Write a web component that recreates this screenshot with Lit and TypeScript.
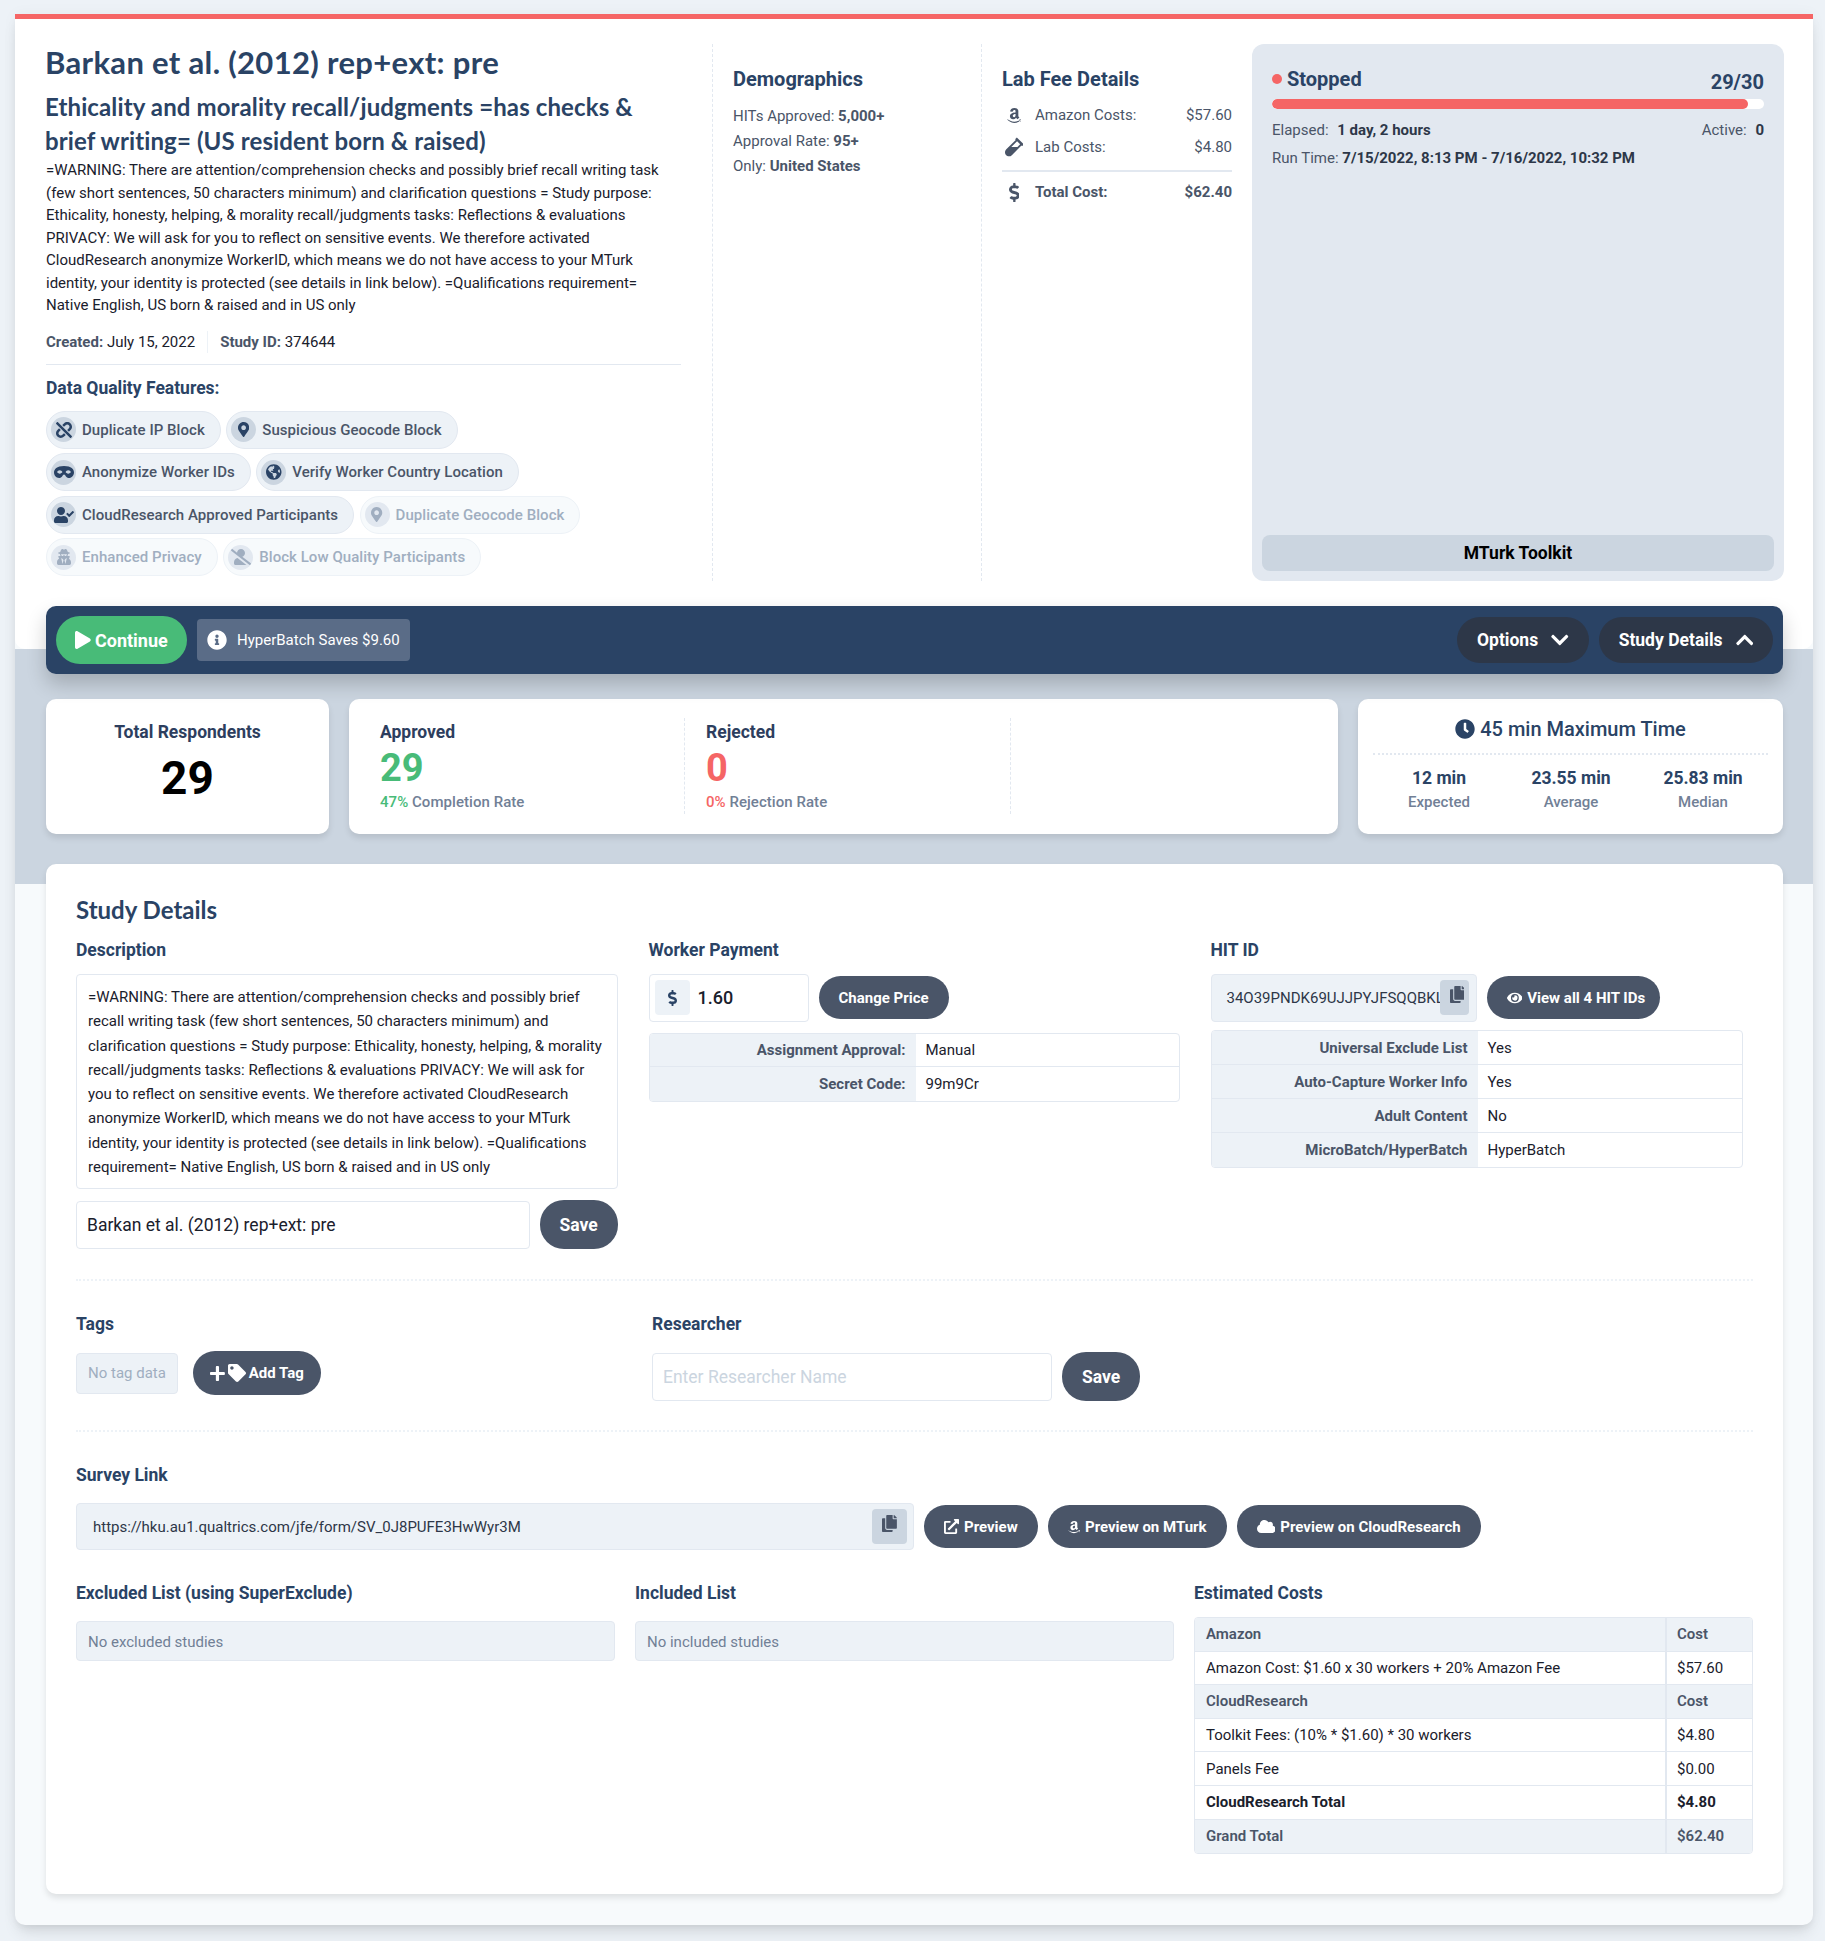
import { LitElement, css, html, svg } from 'lit';
import { customElement } from 'lit/decorators.js';

const ICONS: Record<string, [string, string]> = {
  play: ['0 0 448 512', 'M424.4 214.7L72.4 6.6C43.8-10.3 0 6.1 0 47.9V464c0 37.5 40.7 60.1 72.4 41.3l352-208c31.4-18.5 31.5-64.1 0-82.6z'],
  info: ['0 0 512 512', 'M256 8C119.043 8 8 119.083 8 256c0 136.997 111.043 248 248 248s248-111.003 248-248C504 119.083 392.957 8 256 8zm0 110c23.196 0 42 18.804 42 42s-18.804 42-42 42-42-18.804-42-42 18.804-42 42-42zm56 254c0 6.627-5.373 12-12 12h-88c-6.627 0-12-5.373-12-12v-24c0-6.627 5.373-12 12-12h12v-64h-12c-6.627 0-12-5.373-12-12v-24c0-6.627 5.373-12 12-12h64c6.627 0 12 5.373 12 12v100h12c6.627 0 12 5.373 12 12v24z'],
  marker: ['0 0 384 512', 'M172.268 501.67C26.97 291.031 0 268.413 0 192 0 85.961 85.961 0 192 0s192 85.961 192 192c0 76.413-26.97 99.031-172.268 309.67-9.535 13.774-29.93 13.773-39.464 0zM192 272c44.183 0 80-35.817 80-80s-35.817-80-80-80-80 35.817-80 80 35.817 80 80 80z'],
  clock: ['0 0 512 512', 'M256,8C119,8,8,119,8,256S119,504,256,504,504,393,504,256,393,8,256,8Zm92.49,313h0l-20,25a16,16,0,0,1-22.49,2.5h0l-67-49.72a40,40,0,0,1-15-31.23V112a16,16,0,0,1,16-16h32a16,16,0,0,1,16,16V256l58,42.5A16,16,0,0,1,348.49,321Z'],
  dollar: ['0 0 288 512', 'M209.2 233.4l-108-31.6C88.7 198.2 80 186.5 80 173.5c0-16.3 13.2-29.5 29.5-29.5h66.3c12.2 0 24.2 3.7 34.2 10.5 6.1 4.1 14.3 3.1 19.5-2l34.8-34c7.1-6.9 6.1-18.4-1.8-24.5C238 74.8 207.4 64.1 176 64V16c0-8.8-7.2-16-16-16h-32c-8.8 0-16 7.2-16 16v48h-2.5C45.8 64-5.4 118.7.5 183.6c4.2 46.1 39.4 83.6 83.8 96.6l102.5 30c12.5 3.7 21.2 15.3 21.2 28.3 0 16.3-13.2 29.5-29.5 29.5h-66.3C100 368 88 364.3 78 357.5c-6.1-4.1-14.3-3.1-19.5 2l-34.8 34c-7.1 6.9-6.1 18.4 1.8 24.5 24.5 19.2 55.1 29.9 86.5 30v48c0 8.8 7.2 16 16 16h32c8.8 0 16-7.2 16-16v-48.2c46.6-.9 90.3-28.6 105.7-72.7 21.5-61.6-14.6-124.8-72.5-141.7z'],
  down: ['0 0 448 512', 'M207.029 381.476L12.686 187.132c-9.373-9.373-9.373-24.569 0-33.941l22.667-22.667c9.357-9.357 24.522-9.375 33.901-.04L224 284.505l154.745-154.021c9.379-9.335 24.544-9.317 33.901.04l22.667 22.667c9.373 9.373 9.373 24.569 0 33.941L240.971 381.476c-9.373 9.372-24.569 9.372-33.942 0z'],
  up: ['0 0 448 512', 'M240.971 130.524l194.343 194.343c9.373 9.373 9.373 24.569 0 33.941l-22.667 22.667c-9.357 9.357-24.522 9.375-33.901.04L224 227.495 69.255 381.516c-9.379 9.335-24.544 9.317-33.901-.04l-22.667-22.667c-9.373-9.373-9.373-24.569 0-33.941L207.03 130.525c9.372-9.373 24.568-9.373 33.941-.001z'],
  eye: ['0 0 576 512', 'M572.52 241.4C518.29 135.59 410.93 64 288 64S57.68 135.64 3.48 241.41a32.35 32.35 0 0 0 0 29.19C57.71 376.41 165.07 448 288 448s230.32-71.64 284.52-177.41a32.35 32.35 0 0 0 0-29.19zM288 400a144 144 0 1 1 144-144 143.93 143.93 0 0 1-144 144zm0-240a95.31 95.31 0 0 0-25.31 3.79 47.85 47.85 0 0 1-66.9 66.9A95.78 95.78 0 1 0 288 160z'],
  plus: ['0 0 448 512', 'M416 208H272V64c0-17.67-14.33-32-32-32h-32c-17.67 0-32 14.33-32 32v144H32c-17.67 0-32 14.33-32 32v32c0 17.67 14.33 32 32 32h144v144c0 17.67 14.33 32 32 32h32c17.67 0 32-14.33 32-32V304h144c17.67 0 32-14.33 32-32v-32c0-17.67-14.33-32-32-32z'],
  tag: ['0 0 512 512', 'M0 252.118V48C0 21.49 21.49 0 48 0h204.118a48 48 0 0 1 33.941 14.059l211.882 211.882c18.745 18.745 18.745 49.137 0 67.882L293.823 497.941c-18.745 18.745-49.137 18.745-67.882 0L14.059 286.059A48 48 0 0 1 0 252.118zM112 64c-26.51 0-48 21.49-48 48s21.49 48 48 48 48-21.49 48-48-21.49-48-48-48z'],
  cloud: ['0 0 640 512', 'M537.6 226.6c4.1-10.7 6.4-22.4 6.4-34.6 0-53-43-96-96-96-19.7 0-38.1 6-53.3 16.2C367 64.2 315.3 32 256 32c-88.4 0-160 71.6-160 160 0 2.7.1 5.4.2 8.1C40.2 219.8 0 273.2 0 336c0 79.5 64.5 144 144 144h368c70.7 0 128-57.3 128-128 0-61.9-44-113.6-102.4-125.4z'],
  copy: ['0 0 448 512', 'M320 448v40c0 13.255-10.745 24-24 24H24c-13.255 0-24-10.745-24-24V120c0-13.255 10.745-24 24-24h72v296c0 30.879 25.121 56 56 56h168zm0-344V0H152c-13.255 0-24 10.745-24 24v368c0 13.255 10.745 24 24 24h272c13.255 0 24-10.745 24-24V128H344c-13.2 0-24-10.8-24-24zm120.971-31.029L375.029 7.029A24 24 0 0 0 358.059 0H352v96h96v-6.059a24 24 0 0 0-7.029-16.97z'],
  external: ['0 0 512 512', 'M432,320H400a16,16,0,0,0-16,16V448H64V128H208a16,16,0,0,0,16-16V80a16,16,0,0,0-16-16H48A48,48,0,0,0,0,112V464a48,48,0,0,0,48,48H400a48,48,0,0,0,48-48V336A16,16,0,0,0,432,320ZM488,0h-128c-21.37,0-32.05,25.91-17,41l35.73,35.73L135,320.37a24,24,0,0,0,0,34L157.67,377a24,24,0,0,0,34,0L435.28,133.32,471,169c15,15,41,4.5,41-17V24A24,24,0,0,0,488,0Z'],
  mask: ['0 0 640 512', 'M320.67 64c-442.6 0-357.57 384-158.46 384 39.9 0 77.47-20.69 101.42-55.86l25.73-37.79c15.66-22.99 46.97-22.99 62.63 0l25.73 37.79C401.66 427.31 439.23 448 479.13 448c189.86 0 290.63-384-158.46-384zM184 308.36c-41.06 0-67.76-25.66-80.08-41.05-5.23-6.53-5.23-16.09 0-22.63 12.32-15.4 39.01-41.05 80.08-41.05s67.76 25.66 80.08 41.05c5.23 6.53 5.23 16.09 0 22.63-12.32 15.39-39.02 41.05-80.08 41.05zm272 0c-41.06 0-67.76-25.66-80.08-41.05-5.23-6.53-5.23-16.09 0-22.63 12.32-15.4 39.01-41.05 80.08-41.05s67.76 25.66 80.08 41.05c5.23 6.53 5.23 16.09 0 22.63-12.32 15.39-39.02 41.05-80.08 41.05z'],
  userCheck: ['0 0 640 512', 'M224 256c70.7 0 128-57.3 128-128S294.7 0 224 0 96 57.3 96 128s57.3 128 128 128zm89.6 32h-16.7c-22.2 10.2-46.9 16-72.9 16s-50.6-5.8-72.9-16h-16.7C60.2 288 0 348.2 0 422.4V464c0 26.5 21.5 48 48 48h352c26.5 0 48-21.5 48-48v-41.6c0-74.2-60.2-134.4-134.4-134.4zm323-128.4l-27.8-28.1c-4.6-4.7-12.1-4.7-16.8-.1l-104.8 104-45.5-45.8c-4.6-4.7-12.1-4.7-16.8-.1l-28.1 27.9c-4.7 4.6-4.7 12.1-.1 16.8l81.7 82.3c4.6 4.7 12.1 4.7 16.8.1l141.3-140.2c4.6-4.7 4.7-12.2.1-16.8z'],
  userSlash: ['0 0 640 512', 'M633.8 458.1L362.3 248.3C412.1 230.7 448 183.8 448 128 448 57.3 390.7 0 320 0c-67.1 0-121.5 51.8-126.9 117.4L45.5 3.4C38.5-2 28.5-.8 23 6.2L3.4 31.4c-5.4 7-4.2 17 2.8 22.4l588.4 454.7c7 5.4 17 4.2 22.5-2.8l19.6-25.3c5.4-6.8 4.1-16.9-2.9-22.3zM96 422.4V464c0 26.5 21.5 48 48 48h350.2L207.4 290.3C144.2 301.3 96 356 96 422.4z'],
  unlink: ['0 0 512 512', 'M304.083 405.907c4.686 4.686 4.686 12.284 0 16.971l-44.674 44.674c-59.263 59.262-155.693 59.266-214.961 0-59.264-59.265-59.264-155.696 0-214.96l44.675-44.675c4.686-4.686 12.284-4.686 16.971 0l39.598 39.598c4.686 4.686 4.686 12.284 0 16.971l-44.675 44.674c-28.072 28.073-28.072 73.75 0 101.823 28.072 28.072 73.75 28.073 101.824 0l44.674-44.674c4.686-4.686 12.284-4.686 16.971 0l39.597 39.598zm-56.568-260.216c4.686 4.686 12.284 4.686 16.971 0l44.674-44.674c28.072-28.075 73.75-28.073 101.824 0 28.072 28.073 28.072 73.75 0 101.823l-44.675 44.674c-4.686 4.686-4.686 12.284 0 16.971l39.598 39.598c4.686 4.686 12.284 4.686 16.971 0l44.675-44.675c59.265-59.265 59.265-155.695 0-214.96-59.266-59.264-155.695-59.264-214.961 0l-44.674 44.674c-4.686 4.686-4.686 12.284 0 16.971l39.597 39.598zm234.828 359.28l22.627-22.627c9.373-9.373 9.373-24.569 0-33.941L63.598 7.029c-9.373-9.373-24.569-9.373-33.941 0L7.029 29.657c-9.373 9.373-9.373 24.569 0 33.941l441.373 441.373c9.373 9.372 24.569 9.372 33.941 0z'],
  globe: ['0 0 496 512', 'M248 8C111.03 8 0 119.03 0 256s111.03 248 248 248 248-111.03 248-248S384.97 8 248 8zm82.29 357.6c-3.9 3.88-7.99 7.95-11.31 11.28-2.99 3-5.1 6.7-6.17 10.71-1.51 5.66-2.73 11.38-4.77 16.87l-17.39 46.85c-13.76 3-28 4.69-42.65 4.69v-27.38c1.69-12.62-7.64-36.26-22.63-51.25-6-6-9.37-14.14-9.37-22.63v-32.01c0-11.64-6.27-22.34-16.46-27.97-14.37-7.95-34.81-19.06-48.81-26.11-11.48-5.78-22.1-13.14-31.65-21.75l-.8-.72a114.792 114.792 0 0 1-18.06-20.74c-9.38-13.77-24.66-36.42-34.59-51.14 20.47-45.5 57.36-82.04 103.2-101.89l24.01 12.01C203.48 89.74 216 82.01 216 70.11v-11.3c7.99-1.29 16.12-2.11 24.39-2.42l28.3 28.3c6.25 6.25 6.25 16.38 0 22.63L264 112l-10.34 10.34c-3.12 3.12-3.12 8.19 0 11.31l4.69 4.69c3.12 3.12 3.12 8.19 0 11.31l-8 8a8.008 8.008 0 0 1-5.66 2.34h-8.99c-2.08 0-4.08.81-5.58 2.27l-9.92 9.65a8.008 8.008 0 0 0-1.58 9.31l15.59 31.19c2.66 5.32-1.21 11.58-7.15 11.58h-5.64c-1.93 0-3.79-.7-5.24-1.96l-9.28-8.06a16.017 16.017 0 0 0-15.55-3.1l-31.17 10.39a11.95 11.95 0 0 0-8.17 11.34c0 4.53 2.56 8.66 6.61 10.69l11.08 5.54c9.41 4.71 19.79 7.16 30.31 7.16s22.59 27.29 32 32h66.75c8.49 0 16.62 3.37 22.63 9.37l13.69 13.69a30.503 30.503 0 0 1 8.93 21.57 46.536 46.536 0 0 1-13.72 32.98zM417 274.25c-5.79-1.45-10.84-5-14.15-9.97l-17.98-26.97a23.97 23.97 0 0 1 0-26.62l19.59-29.38c2.32-3.47 5.5-6.29 9.24-8.15l12.98-6.49C440.2 193.59 448 223.87 448 256c0 8.67-.74 17.16-1.82 25.54L417 274.25z'],
  secret: ['0 0 448 512', 'M383.9 308.3l23.9-62.6c4-10.5-3.7-21.7-15-21.7h-58.5c11-18.9 17.8-40.6 17.8-64v-.3c39.2-7.8 64-19.1 64-31.7 0-13.3-27.3-25.1-70.1-33-9.2-32.8-27-65.8-40.6-82.8-9.5-11.9-25.9-15.6-39.5-8.8l-27.6 13.8c-9 4.5-19.6 4.5-28.6 0L182.1 3.4c-13.6-6.8-30-3.1-39.5 8.8-13.5 17-31.4 50-40.6 82.8-42.7 7.9-70 19.7-70 33 0 12.6 24.8 23.9 64 31.7v.3c0 23.4 6.8 45.1 17.8 64H56.3c-11.5 0-19.2 11.7-14.7 22.3l25.8 60.2C27.3 329.8 0 372.7 0 422.4v44.8C0 491.9 20.1 512 44.8 512h358.4c24.7 0 44.8-20.1 44.8-44.8v-44.8c0-48.4-25.8-90.4-64.1-114.1zM176 480l-41.6-192 49.6 32 24 40-32 120zm96 0l-32-120 24-40 49.6-32L272 480zm41.7-298.5c-3.9 11.9-7 24.6-16.5 33.4-10.1 9.3-48 22.4-64-25-2.8-8.4-15.4-8.4-18.3 0-17 50.2-56 32.4-64 25-9.5-8.8-12.7-21.5-16.5-33.4-.8-2.5-6.3-5.7-6.3-5.8v-10.8c28.3 3.6 61 5.8 96 5.8s67.7-2.1 96-5.8v10.8c-.1.1-5.6 3.2-6.4 5.8z'],
  vial: ['0 0 480 512', 'M477.7 186.1L309.5 18.3c-3.1-3.1-8.2-3.1-11.3 0l-34 33.9c-3.1 3.1-3.1 8.2 0 11.3l11.2 11.1L33 316.5c-38.8 38.7-45.1 102-9.4 143.5 20.6 24 49.5 36 78.4 35.9 26.4 0 52.8-10 72.9-30.1l246.3-245.7 11.2 11.1c3.1 3.1 8.2 3.1 11.3 0l34-33.9c3.1-3 3.1-8.1-.1-11.2zM318 256H161l148-147.7 78.5 78.3L318 256z'],
  amazon: ['0 0 448 512', 'M257.2 162.7c-48.7 1.8-169.5 15.5-169.5 117.5 0 109.5 138.3 114 183.5 43.2 6.5 10.2 35.4 37.5 45.3 46.8l56.8-56S341 288.9 341 261.4V114.3C341 89 316.5 32 228.7 32 140.7 32 94 87 94 136.3l73.5 6.8c16.3-49.5 54.2-49.5 54.2-49.5 40.7-.1 35.5 29.8 35.5 69.1zm0 86.8c0 80-84.2 68-84.2 17.2 0-47.2 50.5-56.7 84.2-57.8v40.6zm136 163.5c-7.7 10-70 67-174.5 67S34.2 408.5 9.7 379c-6.8-7.7 1-11.3 5.5-8.3C88.5 415.2 203 488.5 387.7 401c7.5-3.7 13.3 2 5.5 12zm39.8 2.2c-6.5 15.8-16 26.8-21.2 31-5.5 4.5-9.5 2.7-6.5-3.8s19.3-46.5 12.7-55c-6.5-8.3-37-4.3-48-3.2-10.8 1-13 2-14-.3-2.3-5.7 21.7-15.5 37.5-17.5 15.7-1.8 41-.8 46 5.7 3.7 5.1 0 27.1-6.5 43.1z'],
};

const icon = (name: string, h: number) => {
  const [vb, d] = ICONS[name];
  return html`<svg class="ic" viewBox=${vb} height=${h} fill="currentColor" aria-hidden="true">${svg`<path d=${d}></path>`}</svg>`;
};

const DESCRIPTION =
  '=WARNING: There are attention/comprehension checks and possibly brief recall writing task (few short sentences, 50 characters minimum) and clarification questions = Study purpose: Ethicality, honesty, helping, & morality recall/judgments tasks: Reflections & evaluations PRIVACY: We will ask for you to reflect on sensitive events. We therefore activated CloudResearch anonymize WorkerID, which means we do not have access to your MTurk identity, your identity is protected (see details in link below). =Qualifications requirement= Native English, US born & raised and in US only';

type Chip = { label: string; icon: string; size: number; off?: boolean };

const CHIP_ROWS: Chip[][] = [
  [
    { label: 'Duplicate IP Block', icon: 'unlink', size: 16 },
    { label: 'Suspicious Geocode Block', icon: 'marker', size: 15 },
  ],
  [
    { label: 'Anonymize Worker IDs', icon: 'mask', size: 16 },
    { label: 'Verify Worker Country Location', icon: 'globe', size: 16 },
  ],
  [
    { label: 'CloudResearch Approved Participants', icon: 'userCheck', size: 16 },
    { label: 'Duplicate Geocode Block', icon: 'marker', size: 15, off: true },
  ],
  [
    { label: 'Enhanced Privacy', icon: 'secret', size: 16, off: true },
    { label: 'Block Low Quality Participants', icon: 'userSlash', size: 16, off: true },
  ],
];

const PAY_ROWS = [
  ['Assignment Approval:', 'Manual'],
  ['Secret Code:', '99m9Cr'],
];

const HIT_ROWS = [
  ['Universal Exclude List', 'Yes'],
  ['Auto-Capture Worker Info', 'Yes'],
  ['Adult Content', 'No'],
  ['MicroBatch/HyperBatch', 'HyperBatch'],
];

const COST_ROWS: { a: string; b: string; kind: string }[] = [
  { a: 'Amazon', b: 'Cost', kind: 'head' },
  { a: 'Amazon Cost: $1.60 x 30 workers + 20% Amazon Fee', b: '$57.60', kind: '' },
  { a: 'CloudResearch', b: 'Cost', kind: 'head' },
  { a: 'Toolkit Fees: (10% * $1.60) * 30 workers', b: '$4.80', kind: '' },
  { a: 'Panels Fee', b: '$0.00', kind: '' },
  { a: 'CloudResearch Total', b: '$4.80', kind: 'total' },
  { a: 'Grand Total', b: '$62.40', kind: 'head' },
];

@customElement('app-root')
export class AppRoot extends LitElement {
  static styles = css`
    :host {
      display: block;
      background: #edf2f7;
      font-family: Roboto, 'Liberation Sans', sans-serif;
      font-size: 15px;
      color: #1a202c;
    }
    * { box-sizing: border-box; }
    .ic { display: block; flex: none; }

    .page { padding: 14px 12px 17px 15px; }
    .shell {
      background: #f7fafc;
      border-radius: 0 0 10px 10px;
      box-shadow: 0 10px 15px -3px rgba(0,0,0,.1), 0 4px 6px -2px rgba(0,0,0,.05), 0 0 15px rgba(0,0,0,.04);
    }

    .hero {
      position: relative;
      z-index: 1;
      background: #fff;
      border-top: 5px solid #f56565;
      border-radius: 0 0 10px 10px;
      padding: 25px 29px 68px 31px;
      display: grid;
      grid-template-columns: 667px 269px 270px 532px;
      height: 635px;
    }
    .left { padding-right: 31px; border-right: 1px dashed #e2e8f0; }
    .title {
      margin: 0 0 0 -1px;
      font: 700 31px/36px Lato, sans-serif;
      letter-spacing: .33px;
      color: #2a4365;
    }
    .subtitle {
      margin: 10px 0 0 -1px;
      font: 700 24px/34px Lato, sans-serif;
      letter-spacing: .12px;
      color: #2a4365;
    }
    .lead { margin: 1px 0 0; line-height: 22.5px; }
    .meta { margin-top: 14px; line-height: 22px; display: flex; }
    .meta b { color: #4a5568; font-weight: 700; }
    .meta .sep { margin: 0 12px; border-left: 1px solid #edf2f7; }
    .rule { height: 1px; background: #e2e8f0; margin-top: 11px; }
    .dq-title { margin: 11px 0; font-size: 17.5px; font-weight: 700; line-height: 24px; color: #2a4365; }
    .chips { display: flex; flex-direction: column; gap: 4.5px; }
    .chip-row { display: flex; gap: 5.5px; }
    .chip {
      height: 38px;
      display: flex;
      align-items: center;
      gap: 6px;
      padding: 0 15px 0 4px;
      border: 1px solid #e2e8f0;
      border-radius: 19px;
      background: #edf2f7;
      color: #4a5568;
      font-weight: 500;
      letter-spacing: .05px;
    }
    .chip .dot {
      width: 25px;
      height: 25px;
      border-radius: 50%;
      background: #cbd5e0;
      color: #2a4365;
      display: flex;
      align-items: center;
      justify-content: center;
    }
    .chip.off { background: #f7fafc; border-color: #edf2f7; color: #a0aec0; }
    .chip.off .dot { background: #e2e8f0; color: #a0aec0; }

    .col { padding: 21px 20px 0; border-right: 1px dashed #e2e8f0; }
    .col-title { margin: 0; font-size: 20px; line-height: 28px; font-weight: 700; color: #2a4365; }
    .demo { margin-top: 11px; color: #4a5568; line-height: 25px; }
    .fee-col { padding-right: 20px; border-right: 0; }
    .fee { display: flex; align-items: center; height: 32px; color: #4a5568; }
    .fee-icon { width: 33px; display: flex; justify-content: center; padding-right: 9px; }
    .fee-label { flex: 1; }
    .fee-first { margin-top: 6px; }
    .fee-rule { height: 2px; background: #e2e8f0; margin-top: 7px; }
    .fee.total { margin-top: 4px; font-weight: 700; }

    .status {
      display: flex;
      flex-direction: column;
      background: #e2e8f0;
      border-radius: 12px;
      padding: 19px 20px 10px;
    }
    .status-head { display: flex; justify-content: space-between; color: #2a4365; font-size: 20px; font-weight: 700; }
    .stopped { display: flex; align-items: center; gap: 5px; line-height: 30px; height: 30px; margin-top: 1px; }
    .stopped i { width: 10px; height: 10px; border-radius: 50%; background: #f56565; }
    .count { line-height: 30px; margin-top: 4px; }
    .bar { height: 10px; background: #fff; border-radius: 5px; margin-top: 2px; overflow: hidden; }
    .bar div { height: 100%; background: #f56565; border-radius: 5px; }
    .status-line { display: flex; justify-content: space-between; margin-top: 10px; line-height: 22px; color: #4a5568; }
    .status-line b { color: #2d3748; font-weight: 700; margin-left: 5px; }
    .run { margin-top: 6px; line-height: 22px; color: #4a5568; }
    .run b { color: #2d3748; font-weight: 700; }
    .toolkit {
      margin: auto -10px 0;
      height: 36px;
      border-radius: 8px;
      background: #cbd5e0;
      color: #000;
      font-size: 17.5px;
      font-weight: 700;
      display: flex;
      align-items: center;
      justify-content: center;
    }

    .band { display: flow-root; background: #cbd5e0; padding: 0 30px 0 31px; height: 235px; }
    .nav {
      position: relative;
      z-index: 2;
      margin-top: -43px;
      height: 68px;
      background: #2a4365;
      border-radius: 10px;
      padding: 0 10px;
      display: flex;
      align-items: center;
      gap: 10px;
      box-shadow: 0 10px 20px rgba(0,0,0,.2);
    }
    .continue {
      width: 131px;
      height: 48px;
      border-radius: 24px;
      background: #48bb78;
      color: #fff;
      font-size: 18px;
      font-weight: 700;
      display: flex;
      align-items: center;
      justify-content: center;
      gap: 4px;
    }
    .saves {
      height: 42px;
      border-radius: 4px;
      background: #5a6c87;
      color: #fff;
      padding: 0 10px;
      display: flex;
      align-items: center;
      gap: 10px;
    }
    .nav-btn {
      height: 46px;
      border-radius: 23px;
      background: #2d3748;
      color: #fff;
      font-size: 17.5px;
      font-weight: 700;
      padding: 0 20px;
      display: flex;
      align-items: center;
      gap: 13px;
    }
    .push { margin-left: auto; }

    .stats {
      position: relative;
      z-index: 1;
      display: grid;
      grid-template-columns: 283px 989px 425px;
      gap: 20px;
      margin-top: 25px;
    }
    .stat { background: #fff; border-radius: 10px; box-shadow: 0 4px 6px rgba(0,0,0,.1); height: 135px; }
    .stat-total { padding-top: 19px; text-align: center; }
    .stat-label { font-size: 17.5px; font-weight: 700; line-height: 28px; color: #2d3e5e; }
    .stat-big { margin-top: 4px; font-size: 46px; font-weight: 700; line-height: 56px; color: #000; }
    .split { display: grid; grid-template-columns: 326px 326px 1fr; padding: 19px 10px 20px; }
    .split > div { padding-left: 21px; border-right: 1px dashed #e2e8f0; }
    .split > div:last-child { border-right: 0; }
    .num { font-size: 38px; font-weight: 700; line-height: 44px; }
    .green { color: #48bb78; }
    .red { color: #f56565; }
    .rate { font-weight: 500; line-height: 24px; color: #718096; letter-spacing: .05px; }
    .time { padding: 16px 15px 0; }
    .time-title {
      display: flex;
      align-items: center;
      justify-content: center;
      gap: 5px;
      height: 40px;
      padding-bottom: 11px;
      border-bottom: 2px dotted #e2e8f0;
      font-size: 20px;
      font-weight: 500;
      color: #2a4365;
    }
    .time-grid { display: grid; grid-template-columns: repeat(3, 132px); margin-top: 10px; text-align: center; }
    .time-val { font-size: 17.5px; font-weight: 700; line-height: 26px; color: #2a4365; }
    .time-label { font-weight: 500; line-height: 23px; color: #718096; }

    .lower { padding: 0 30px 31px 31px; }
    .details {
      position: relative;
      z-index: 1;
      margin-top: -20px;
      background: #fff;
      border-radius: 10px;
      box-shadow: 0 4px 6px rgba(0,0,0,.1);
      padding: 31px 30px 40px;
    }
    .details h2 {
      margin: 0;
      font: 700 24px/30px Lato, sans-serif;
      color: #2a4365;
    }
    .label { font-size: 17.5px; font-weight: 700; line-height: 24px; color: #2a4365; }
    .row-one { display: grid; grid-template-columns: 541.5px 531px 532px; column-gap: 31px; margin-top: 13px; }
    .desc {
      margin-top: 12px;
      height: 215px;
      padding: 10px 11px;
      border: 1px solid #e2e8f0;
      border-radius: 4px;
      line-height: 24.3px;
    }
    .inline { display: flex; align-items: center; gap: 10px; }
    .field {
      height: 48px;
      border: 1px solid #e2e8f0;
      border-radius: 4px;
      display: flex;
      align-items: center;
      padding: 0 10px;
      font-size: 17.5px;
    }
    .name-row { margin-top: 11px; }
    .name-row .field { flex: 1; }
    .pill {
      background: #4a5568;
      color: #fff;
      border-radius: 24px;
      font-weight: 700;
      display: flex;
      align-items: center;
      justify-content: center;
      gap: 5px;
      padding: 0 20px;
      height: 43px;
      white-space: nowrap;
    }
    .pill.save { width: 78px; height: 49px; padding: 0; font-size: 17.5px; }
    .pill.view { padding-right: 15px; }
    .pay-row { margin-top: 11.5px; }
    .price { width: 160px; padding: 0 5px; gap: 8px; font-weight: 500; font-size: 18px; }
    .price span {
      width: 35px;
      height: 35px;
      border-radius: 4px;
      background: #edf2f7;
      color: #2a4365;
      display: flex;
      align-items: center;
      justify-content: center;
    }
    .kv {
      width: 100%;
      margin-top: 11px;
      border: 1px solid #e2e8f0;
      border-radius: 4px;
      border-collapse: separate;
      border-spacing: 0;
      overflow: hidden;
      table-layout: fixed;
    }
    .kv th, .kv td { height: 34px; padding: 0 10px; border-bottom: 1px solid #e2e8f0; }
    .kv tr:last-child th, .kv tr:last-child td { border-bottom: 0; }
    .kv th { background: #edf2f7; color: #4a5568; text-align: right; font-weight: 700; }
    .kv td { text-align: left; }
    .kv.tight th, .kv.tight td { height: 33.5px; }
    .kv.up { margin-top: 8.5px; }
    .hit { width: 266px; background: #edf2f7; padding: 0 7px 0 15px; font-size: 15px; color: #2d3748; overflow: hidden; }
    .hit > span { flex: 1; min-width: 0; white-space: nowrap; }
    .copy {
      flex: none;
      background: #cbd5e0;
      color: #4a5568;
      border-radius: 4px;
      display: flex;
      align-items: center;
      justify-content: center;
    }
    .hit .copy { width: 29px; height: 35px; padding: 0 0 6px 6px; }
    .divider { height: 2px; margin-top: 30px; border-top: 2px dotted #edf2f7; }
    .divider.second { margin-top: 29px; }
    .row-two { display: grid; grid-template-columns: 576px 1fr; margin-top: 31px; }
    .no-tag {
      height: 41px;
      padding: 0 11px;
      background: #edf2f7;
      border: 1px solid #e2e8f0;
      border-radius: 4px;
      color: #a0aec0;
      display: flex;
      align-items: center;
    }
    .tag-row { margin-top: 15px; gap: 15px; }
    .tag-row .pill { height: 44px; width: 128px; padding: 0; gap: 3px; }
    .res-row { margin-top: 16px; }
    .res-row .field { width: 400px; color: #cbd5e0; }
    .survey { margin-top: 30.5px; }
    .link-row { margin-top: 16.5px; }
    .link {
      width: 838px;
      height: 47px;
      padding: 0 6px 0 16px;
      border-radius: 4px;
      border: 1px solid #e2e8f0;
      background: #edf2f7;
      color: #2d3748;
      display: flex;
      align-items: center;
      justify-content: space-between;
    }
    .link .copy { width: 35px; height: 35px; padding-bottom: 6px; }
    .row-three { display: grid; grid-template-columns: 539px 539px 559px; column-gap: 20px; margin-top: 31px; }
    .empty {
      margin-top: 16px;
      height: 40px;
      padding: 1px 11px 0;
      display: flex;
      align-items: center;
      background: #edf2f7;
      border: 1px solid #e2e8f0;
      border-radius: 4px;
      color: #718096;
    }
    .costs {
      width: 100%;
      margin-top: 12px;
      border: 1px solid #e2e8f0;
      border-radius: 4px;
      border-collapse: separate;
      border-spacing: 0;
      overflow: hidden;
      table-layout: fixed;
    }
    .costs td { height: 33.6px; padding: 0 11px; border-bottom: 1px solid #e2e8f0; }
    .costs td:first-child { border-right: 2px solid #e2e8f0; }
    .costs td:last-child { padding-left: 10px; }
    .costs tr:last-child td { border-bottom: 0; }
    .costs .head td { background: #edf2f7; color: #4a5568; font-weight: 600; }
    .costs .total td { font-weight: 700; color: #1a202c; }
  `;

  private kvTable(rows: string[][], extra: string) {
    return html`<table class="kv ${extra}">
      <colgroup><col style="width: 266px" /><col /></colgroup>
      ${rows.map(([k, v]) => html`<tr><th>${k}</th><td>${v}</td></tr>`)}
    </table>`;
  }

  private renderHero() {
    return html`
      <section class="hero">
        <div class="left">
          <h1 class="title">Barkan et al. (2012) rep+ext: pre</h1>
          <h3 class="subtitle">Ethicality and morality recall/judgments =has checks &amp; brief writing= (US resident born &amp; raised)</h3>
          <p class="lead">${DESCRIPTION}</p>
          <div class="meta">
            <span><b>Created:</b> July 15, 2022</span><span class="sep"></span><span><b>Study ID:</b> 374644</span>
          </div>
          <div class="rule"></div>
          <div class="dq-title">Data Quality Features:</div>
          <div class="chips">
            ${CHIP_ROWS.map(
              (row) => html`<div class="chip-row">
                ${row.map(
                  (c) => html`<div class="chip ${c.off ? 'off' : ''}">
                    <span class="dot">${icon(c.icon, c.size)}</span>${c.label}
                  </div>`,
                )}
              </div>`,
            )}
          </div>
        </div>

        <div class="col">
          <h4 class="col-title">Demographics</h4>
          <div class="demo">
            <div>HITs Approved: <b>5,000+</b></div>
            <div>Approval Rate: <b>95+</b></div>
            <div>Only: <b>United States</b></div>
          </div>
        </div>

        <div class="col fee-col">
          <h4 class="col-title">Lab Fee Details</h4>
          <div class="fee fee-first">
            <span class="fee-icon">${icon('amazon', 17)}</span><span class="fee-label">Amazon Costs:</span><span>$57.60</span>
          </div>
          <div class="fee">
            <span class="fee-icon">${icon('vial', 20)}</span><span class="fee-label">Lab Costs:</span><span>$4.80</span>
          </div>
          <div class="fee-rule"></div>
          <div class="fee total">
            <span class="fee-icon">${icon('dollar', 19)}</span><span class="fee-label">Total Cost:</span><span>$62.40</span>
          </div>
        </div>

        <div class="status">
          <div class="status-head">
            <span class="stopped"><i></i>Stopped</span><span class="count">29/30</span>
          </div>
          <div class="bar"><div style="width: ${(29 / 30) * 100}%"></div></div>
          <div class="status-line">
            <span>Elapsed: <b>1 day, 2 hours</b></span><span>Active: <b>0</b></span>
          </div>
          <div class="run">Run Time: <b>7/15/2022, 8:13 PM - 7/16/2022, 10:32 PM</b></div>
          <div class="toolkit">MTurk Toolkit</div>
        </div>
      </section>
    `;
  }

  private renderBand() {
    return html`
      <section class="band">
        <div class="nav">
          <div class="continue">${icon('play', 18)}Continue</div>
          <div class="saves">${icon('info', 20)}HyperBatch Saves $9.60</div>
          <div class="nav-btn push">Options ${icon('down', 20)}</div>
          <div class="nav-btn">Study Details ${icon('up', 20)}</div>
        </div>
        <div class="stats">
          <div class="stat stat-total">
            <div class="stat-label">Total Respondents</div>
            <div class="stat-big">29</div>
          </div>
          <div class="stat split">
            <div>
              <div class="stat-label">Approved</div>
              <div class="num green">29</div>
              <div class="rate"><span class="green">47%</span> Completion Rate</div>
            </div>
            <div>
              <div class="stat-label">Rejected</div>
              <div class="num red">0</div>
              <div class="rate"><span class="red">0%</span> Rejection Rate</div>
            </div>
            <div></div>
          </div>
          <div class="stat time">
            <div class="time-title">${icon('clock', 20)}45 min Maximum Time</div>
            <div class="time-grid">
              ${[['12 min', 'Expected'], ['23.55 min', 'Average'], ['25.83 min', 'Median']].map(
                ([v, l]) => html`<div><div class="time-val">${v}</div><div class="time-label">${l}</div></div>`,
              )}
            </div>
          </div>
        </div>
      </section>
    `;
  }

  private renderDetails() {
    return html`
      <section class="lower">
        <div class="details">
          <h2>Study Details</h2>
          <div class="row-one">
            <div>
              <div class="label">Description</div>
              <div class="desc">${DESCRIPTION}</div>
              <div class="inline name-row">
                <div class="field">Barkan et al. (2012) rep+ext: pre</div>
                <div class="pill save">Save</div>
              </div>
            </div>
            <div>
              <div class="label">Worker Payment</div>
              <div class="inline pay-row">
                <div class="field price"><span>${icon('dollar', 16)}</span>1.60</div>
                <div class="pill">Change Price</div>
              </div>
              ${this.kvTable(PAY_ROWS, 'tight')}
            </div>
            <div>
              <div class="label">HIT ID</div>
              <div class="inline pay-row">
                <div class="field hit"><span>34O39PNDK69UJJPYJFSQQBKL</span><div class="copy">${icon('copy', 17)}</div></div>
                <div class="pill view">${icon('eye', 14)}View all 4 HIT IDs</div>
              </div>
              ${this.kvTable(HIT_ROWS, 'up')}
            </div>
          </div>

          <div class="divider"></div>
          <div class="row-two">
            <div>
              <div class="label">Tags</div>
              <div class="inline tag-row">
                <div class="no-tag">No tag data</div>
                <div class="pill">${icon('plus', 17)}${icon('tag', 18)}Add Tag</div>
              </div>
            </div>
            <div>
              <div class="label">Researcher</div>
              <div class="inline res-row">
                <div class="field">Enter Researcher Name</div>
                <div class="pill save">Save</div>
              </div>
            </div>
          </div>

          <div class="divider second"></div>
          <div class="survey">
            <div class="label">Survey Link</div>
            <div class="inline link-row">
              <div class="link">https://hku.au1.qualtrics.com/jfe/form/SV_0J8PUFE3HwWyr3M<div class="copy">${icon('copy', 17)}</div></div>
              <div class="pill">${icon('external', 15)}Preview</div>
              <div class="pill">${icon('amazon', 14)}Preview on MTurk</div>
              <div class="pill">${icon('cloud', 15)}Preview on CloudResearch</div>
            </div>
          </div>

          <div class="row-three">
            <div>
              <div class="label">Excluded List (using SuperExclude)</div>
              <div class="empty">No excluded studies</div>
            </div>
            <div>
              <div class="label">Included List</div>
              <div class="empty">No included studies</div>
            </div>
            <div>
              <div class="label">Estimated Costs</div>
              <table class="costs">
                <colgroup><col style="width: 472px" /><col /></colgroup>
                ${COST_ROWS.map((r) => html`<tr class=${r.kind}><td>${r.a}</td><td>${r.b}</td></tr>`)}
              </table>
            </div>
          </div>
        </div>
      </section>
    `;
  }

  render() {
    return html`<div class="page">
      <div class="shell">${this.renderHero()}${this.renderBand()}${this.renderDetails()}</div>
    </div>`;
  }
}
